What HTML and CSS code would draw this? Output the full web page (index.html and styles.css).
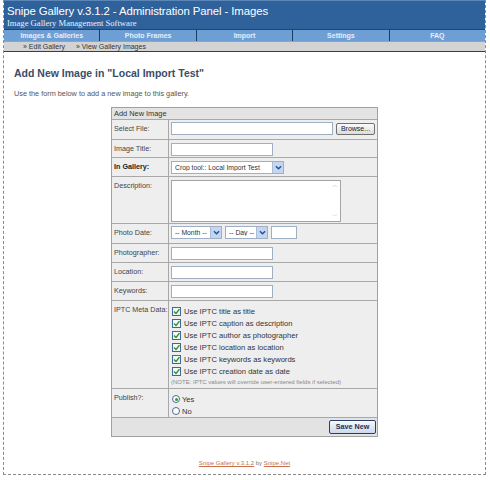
FILE: index.html
```html
<!DOCTYPE html>
<html>
<head>
<meta charset="utf-8">
<link rel="stylesheet" href="styles.css">
</head>
<body>
<div class="page">
  <div class="header">
    <div class="title">Snipe Gallery v.3.1.2 - Administration Panel - Images</div>
    <div class="subtitle">Image Gallery Management Software</div>
  </div>
  <div class="nav">
    <div class="nav-item">Images &amp; Galleries</div>
    <div class="nav-item">Photo Frames</div>
    <div class="nav-item">Import</div>
    <div class="nav-item">Settings</div>
    <div class="nav-item last">FAQ</div>
  </div>
  <div class="subnav">
    <span class="sublink">» Edit Gallery</span>
    <span class="sublink">» View Gallery Images</span>
  </div>
  <div class="content">
    <h1 class="heading">Add New Image in "Local Import Test"</h1>
    <p class="intro">Use the form below to add a new image to this gallery.</p>
    <div class="form">
      <div class="head">Add New Image</div>
      <div class="row h-file">
        <div class="lbl">Select File:</div>
        <div class="val"><div class="line"><span class="box w-file"></span><span class="btn browse">Browse...</span></div></div>
      </div>
      <div class="row h-title">
        <div class="lbl">Image Title:</div>
        <div class="val"><span class="box w-text"></span></div>
      </div>
      <div class="row h-gal">
        <div class="lbl bold">In Gallery:</div>
        <div class="val"><span class="sel w-gal"><span class="sel-txt">Crop tool:: Local Import Test</span><span class="arrow"><svg viewBox="0 0 8 8" width="7" height="7"><path d="M1 2.5 L4 5.5 L7 2.5" fill="none" stroke="#2b4f8a" stroke-width="1.6"/></svg></span></span></div>
      </div>
      <div class="row h-desc">
        <div class="lbl">Description:</div>
        <div class="val"><div class="textarea"><span class="sb"><span>︿</span><span>﹀</span></span></div></div>
      </div>
      <div class="row h-date">
        <div class="lbl">Photo Date:</div>
        <div class="val"><div class="line">
          <span class="sel w-mon"><span class="sel-txt">-- Month --</span><span class="arrow"><svg viewBox="0 0 8 8" width="7" height="7"><path d="M1 2.5 L4 5.5 L7 2.5" fill="none" stroke="#2b4f8a" stroke-width="1.6"/></svg></span></span>
          <span class="sel w-day"><span class="sel-txt">-- Day --</span><span class="arrow"><svg viewBox="0 0 8 8" width="7" height="7"><path d="M1 2.5 L4 5.5 L7 2.5" fill="none" stroke="#2b4f8a" stroke-width="1.6"/></svg></span></span>
          <span class="box w-year"></span>
        </div></div>
      </div>
      <div class="row h-std">
        <div class="lbl">Photographer:</div>
        <div class="val"><span class="box w-text"></span></div>
      </div>
      <div class="row h-std">
        <div class="lbl">Location:</div>
        <div class="val"><span class="box w-text"></span></div>
      </div>
      <div class="row h-std">
        <div class="lbl">Keywords:</div>
        <div class="val"><span class="box w-text"></span></div>
      </div>
      <div class="row h-iptc">
        <div class="lbl">IPTC Meta Data:</div>
        <div class="val iptc">
          <div class="chk"><span class="cb"><svg viewBox="0 0 9 9" width="9" height="9"><path d="M2 4.5 L4 6.5 L7.5 2.2" fill="none" stroke="#2a8a2a" stroke-width="1.3"/></svg></span>Use IPTC title as title</div>
          <div class="chk"><span class="cb"><svg viewBox="0 0 9 9" width="9" height="9"><path d="M2 4.5 L4 6.5 L7.5 2.2" fill="none" stroke="#2a8a2a" stroke-width="1.3"/></svg></span>Use IPTC caption as description</div>
          <div class="chk"><span class="cb"><svg viewBox="0 0 9 9" width="9" height="9"><path d="M2 4.5 L4 6.5 L7.5 2.2" fill="none" stroke="#2a8a2a" stroke-width="1.3"/></svg></span>Use IPTC author as photographer</div>
          <div class="chk"><span class="cb"><svg viewBox="0 0 9 9" width="9" height="9"><path d="M2 4.5 L4 6.5 L7.5 2.2" fill="none" stroke="#2a8a2a" stroke-width="1.3"/></svg></span>Use IPTC location as location</div>
          <div class="chk"><span class="cb"><svg viewBox="0 0 9 9" width="9" height="9"><path d="M2 4.5 L4 6.5 L7.5 2.2" fill="none" stroke="#2a8a2a" stroke-width="1.3"/></svg></span>Use IPTC keywords as keywords</div>
          <div class="chk"><span class="cb"><svg viewBox="0 0 9 9" width="9" height="9"><path d="M2 4.5 L4 6.5 L7.5 2.2" fill="none" stroke="#2a8a2a" stroke-width="1.3"/></svg></span>Use IPTC creation date as date</div>
          <div class="note">(NOTE: IPTC values will override user-entered fields if selected)</div>
        </div>
      </div>
      <div class="row h-pub">
        <div class="lbl">Publish?:</div>
        <div class="val pub">
          <div class="radio"><span class="rb on"></span>Yes</div>
          <div class="radio"><span class="rb"></span>No</div>
        </div>
      </div>
      <div class="foot"><span class="btn save">Save New</span></div>
    </div>
    <div class="footer"><span class="flink">Snipe Gallery v.3.1.2</span> by <span class="flink">Snipe.Net</span></div>
  </div>
</div>
</body>
</html>
```

FILE: styles.css
```css
html, body { margin: 0; padding: 0; background: #fff; }
body { font-family: "Liberation Sans", Arial, sans-serif; color: #333; }

.page {
  margin-left: 3px;
  width: 481px;
  height: 474px;
  border: 1px dashed #8a8a8a;
  border-top: none;
}

.header {
  height: 29px;
  background: #2f619b;
  border-top: 1px solid #5b86b8;
  box-sizing: border-box;
  padding: 4px 0 0 3px;
  color: #fff;
}
.title { font-size: 11.4px; line-height: 13px; letter-spacing: -0.1px; }
.subtitle { font-family: "Liberation Serif", "Times New Roman", serif; font-size: 8.6px; line-height: 10px; color: #e9f0f8; }

.nav {
  display: flex;
  height: 12px;
  background: #6e9fd4;
  border-top: 1px solid #22446e;
  box-sizing: border-box;
}
.nav-item {
  flex: 1;
  text-align: center;
  font-size: 7px;
  line-height: 11px;
  font-weight: bold;
  color: #e6eef8;
  border-right: 1px solid #1f3d63;
}
.nav-item.last { border-right: none; }

.subnav {
  height: 11px;
  background: #d3d3d3;
  border-top: 1px solid #9aa3ad;
  border-bottom: 1px solid #3d3d3d;
  box-sizing: border-box;
  padding-left: 19px;
  font-size: 7px;
  line-height: 9px;
  color: #333;
}
.sublink { margin-right: 9px; }

.content { padding: 0 0 0 10px; }
.heading {
  margin: 15px 0 0 0;
  font-size: 10.5px;
  line-height: 12px;
  font-weight: bold;
  color: #3b4c68;
}
.intro {
  margin: 10px 0 0 0;
  font-size: 7.3px;
  line-height: 9px;
  color: #555;
}

.form {
  margin: 9px 0 0 97px;
  width: 267px;
  box-sizing: border-box;
  background: #eeeeee;
  font-size: 7.4px;
  color: #444;
  border: 1px solid #a0a0a0;
}
.head {
  height: 11px;
  background: #e3e3e3;
  padding: 0 2px;
  line-height: 11px;
  font-size: 7.4px;
  color: #333;
  border-bottom: 1px solid #a8a8a8;
}
.row {
  display: grid;
  grid-template-columns: 57px 1fr;
  border-bottom: 1px solid #a8a8a8;
  box-sizing: border-box;
}
.lbl {
  border-right: 1px solid #a8a8a8;
  padding: 4px 1px 0 2px;
  line-height: 9px;
  font-size: 7.2px;
  color: #444;
  white-space: nowrap;
}
.lbl.bold { font-weight: bold; color: #222; }
.val { padding: 2px 0 0 2px; }

.h-file { height: 20px; }
.h-title { height: 18px; }
.h-gal { height: 19px; }
.h-desc { height: 47px; }
.h-date { height: 20px; }
.h-std { height: 19px; }
.h-iptc { height: 88px; }
.h-pub { height: 29px; }

.line { display: flex; align-items: center; gap: 3px; }
.box {
  display: block;
  height: 13px;
  background: #fff;
  border: 1px solid #9fb0c4;
  box-sizing: border-box;
}
.w-file { width: 162px; }
.w-text { width: 102px; margin-top: 1px; }
.w-year { width: 26px; }

.btn {
  display: inline-block;
  box-sizing: border-box;
  height: 12px;
  border: 1px solid #707070;
  border-radius: 2px;
  background: linear-gradient(#fbfbfb, #dcdcdc);
  font-size: 7px;
  line-height: 10px;
  text-align: center;
  color: #222;
}
.browse { width: 39px; }

.sel {
  display: flex;
  align-items: center;
  height: 13px;
  box-sizing: border-box;
  background: #fff;
  border: 1px solid #9fb0c4;
  font-size: 6.8px;
  color: #333;
  margin-top: 1px;
}
.sel-txt { flex: 1; padding-left: 3px; white-space: nowrap; overflow: hidden; }
.arrow {
  width: 10px;
  height: 11px;
  background: #c3d7f2;
  border-left: 1px solid #aabcd6;
  display: flex;
  align-items: center;
  justify-content: center;
}
.w-gal { width: 113px; }
.w-mon { width: 51px; margin-top: 0; }
.w-day { width: 43px; margin-top: 0; }

.textarea {
  width: 170px;
  height: 42px;
  margin-top: 1px;
  box-sizing: border-box;
  background: #fff;
  border: 1px solid #a4a4a4;
  display: flex;
  justify-content: flex-end;
}
.sb {
  width: 10px;
  display: flex;
  flex-direction: column;
  justify-content: space-between;
  align-items: center;
  font-size: 6px;
  line-height: 9px;
  color: #a9b9cc;
}

.iptc { padding-top: 4px; }
.chk {
  display: flex;
  align-items: center;
  height: 12px;
  font-size: 7.6px;
  color: #333;
  white-space: nowrap;
}
.cb {
  width: 9px;
  height: 9px;
  box-sizing: border-box;
  border: 1px solid #3b6a9a;
  background: #f4f8f4;
  margin: 0 3px 0 1px;
  display: flex;
}
.cb svg { margin: -1px; }
.note { font-size: 6px; color: #8a8a8a; line-height: 9px; margin-top: 1px; white-space: nowrap; }

.pub { padding-top: 4px; }
.radio {
  display: flex;
  align-items: center;
  height: 12px;
  font-size: 7.6px;
  color: #333;
}
.rb {
  width: 8px;
  height: 8px;
  box-sizing: border-box;
  border: 1px solid #4a6c94;
  border-radius: 50%;
  background: #fff;
  margin: 0 2px 0 1px;
  position: relative;
}
.rb.on::after {
  content: "";
  position: absolute;
  left: 1.5px;
  top: 1.5px;
  width: 3px;
  height: 3px;
  border-radius: 50%;
  background: #2c9a2c;
}

.foot {
  height: 18px;
  box-sizing: border-box;
  text-align: right;
  padding: 2px 1px 0 0;
  background: #e3e3e3;
}
.save {
  width: 47px;
  height: 14px;
  line-height: 12px;
  border: 1px solid #2a3f66;
  background: linear-gradient(#f6f8fc, #cdd8ea);
  font-size: 7.2px;
  font-weight: bold;
  color: #1f2f55;
}

.footer {
  margin-top: 23px;
  margin-left: -10px;
  text-align: center;
  font-size: 6px;
  color: #777;
}
.flink { color: #c8704a; text-decoration: underline; }
```
